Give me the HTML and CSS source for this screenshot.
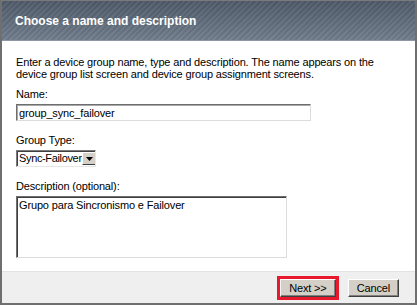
FILE: index.html
```html
<!DOCTYPE html>
<html lang="en">
<head>
  <meta charset="UTF-8" />
  <title>Device Group</title>
  <link rel="stylesheet" href="styles.css">
</head>
<body>
  <div class="dialog">
    <div class="dialog-header">Choose a name and description</div>
    <div class="dialog-body">
      <p class="intro">Enter a device group name, type and description. The name appears on the device group list screen and device group assignment screens.</p>
      <div class="field">
        <label for="name">Name:</label>
        <input id="name" class="text-input" type="text" value="group_sync_failover" />
      </div>
      <div class="field">
        <label>Group Type:</label>
        <div class="select">
          <span class="select-value">Sync-Failover</span>
          <span class="select-arrow">
            <svg width="7" height="4" viewBox="0 0 7 4"><path d="M0 0h7L3.5 4z" fill="#000"/></svg>
          </span>
        </div>
      </div>
      <div class="field">
        <label for="desc">Description (optional):</label>
        <textarea id="desc" class="text-area">Grupo para Sincronismo e Failover</textarea>
      </div>
    </div>
    <div class="dialog-footer">
      <button class="btn btn-active" type="button">Next &gt;&gt;</button>
      <button class="btn" type="button">Cancel</button>
    </div>
  </div>
</body>
</html>
```

FILE: styles.css
```css
body {
  margin: 0;
  padding: 0;
  background: #fff;
  font-family: 'Liberation Sans', Arial, sans-serif;
  font-size: 11px;
  letter-spacing: -0.15px;
  color: #000;
}
.dialog {
  width: 417px;
  height: 305px;
  box-sizing: border-box;
  border: 2px solid #6f6f6f;
  border-top: 1px solid #7a7a7a;
  display: flex;
  flex-direction: column;
  background: #fff;
}
.dialog-header {
  height: 42px;
  border-bottom: 1px solid #8c97a3;
  box-sizing: content-box;
  padding-left: 13px;
  display: flex;
  align-items: center;
  color: #fff;
  font-family: 'Liberation Sans', Arial, sans-serif;
  font-weight: bold;
  font-size: 12px;
  letter-spacing: 0;
  background:
    repeating-linear-gradient(135deg, rgba(255,255,255,0.05) 0 2px, rgba(0,0,0,0.04) 2px 4px),
    linear-gradient(#4e5968, #707d8c);
}
.dialog-body {
  flex: 1;
  padding: 15px 14px 0;
}
.intro {
  margin: 0 0 8px;
  line-height: 12px;
}
.field {
  margin-bottom: 13px;
}
.field label {
  display: block;
  line-height: 13px;
  margin-bottom: 3px;
}
.text-input {
  display: block;
  width: 295px;
  height: 17px;
  box-sizing: border-box;
  margin: 0;
  padding: 0 2px;
  font: 11px 'Liberation Sans', Arial, sans-serif;
  letter-spacing: -0.15px;
  border: 1px solid #dcdcdc;
  border-top-color: #6e6e6e;
  border-left-color: #6e6e6e;
  box-shadow: inset 1px 1px 0 #a8a8a8;
  outline: none;
}
.select {
  display: flex;
  align-items: stretch;
  width: 80px;
  height: 17px;
  box-sizing: border-box;
  border: 1px solid #e6e6e6;
  border-top-color: #7a7a7a;
  border-left-color: #7a7a7a;
  box-shadow: inset 1px 1px 0 #404040;
  padding: 1px;
  white-space: nowrap;
  overflow: hidden;
}
.select-value {
  flex: 1;
  padding-left: 1px;
  line-height: 13px;
  letter-spacing: -0.35px;
}
.select-arrow {
  flex: none;
  width: 15px;
  background: #d4d0c8;
  border: 1px solid #404040;
  border-top-color: #fff;
  border-left-color: #fff;
  box-sizing: border-box;
  display: flex;
  align-items: center;
  justify-content: center;
}
.text-area {
  display: block;
  width: 271px;
  height: 62px;
  box-sizing: border-box;
  margin: 0;
  padding: 2px 2px;
  resize: none;
  font: 11px 'Liberation Sans', Arial, sans-serif;
  letter-spacing: -0.15px;
  border: 1px solid #dcdcdc;
  border-top-color: #6e6e6e;
  border-left-color: #6e6e6e;
  box-shadow: inset 1px 1px 0 #404040;
  outline: none;
}
.dialog-footer {
  height: 33px;
  box-sizing: content-box;
  border-top: 1px solid #e3e3e3;
  background: #efefef;
  display: flex;
  justify-content: flex-end;
  align-items: center;
  gap: 12px;
  padding-right: 16px;
}
.btn {
  height: 18px;
  box-sizing: border-box;
  padding: 0 8px;
  font: 11px 'Liberation Sans', Arial, sans-serif;
  letter-spacing: -0.15px;
  color: #000;
  background: #d4d0c8;
  border: 1px solid #404040;
  border-top-color: #fff;
  border-left-color: #fff;
  box-shadow: inset -1px -1px 0 #808080;
  cursor: pointer;
}
.btn-active {
  outline: 3px solid #e8192c;
  padding: 0 8px;
}
```
